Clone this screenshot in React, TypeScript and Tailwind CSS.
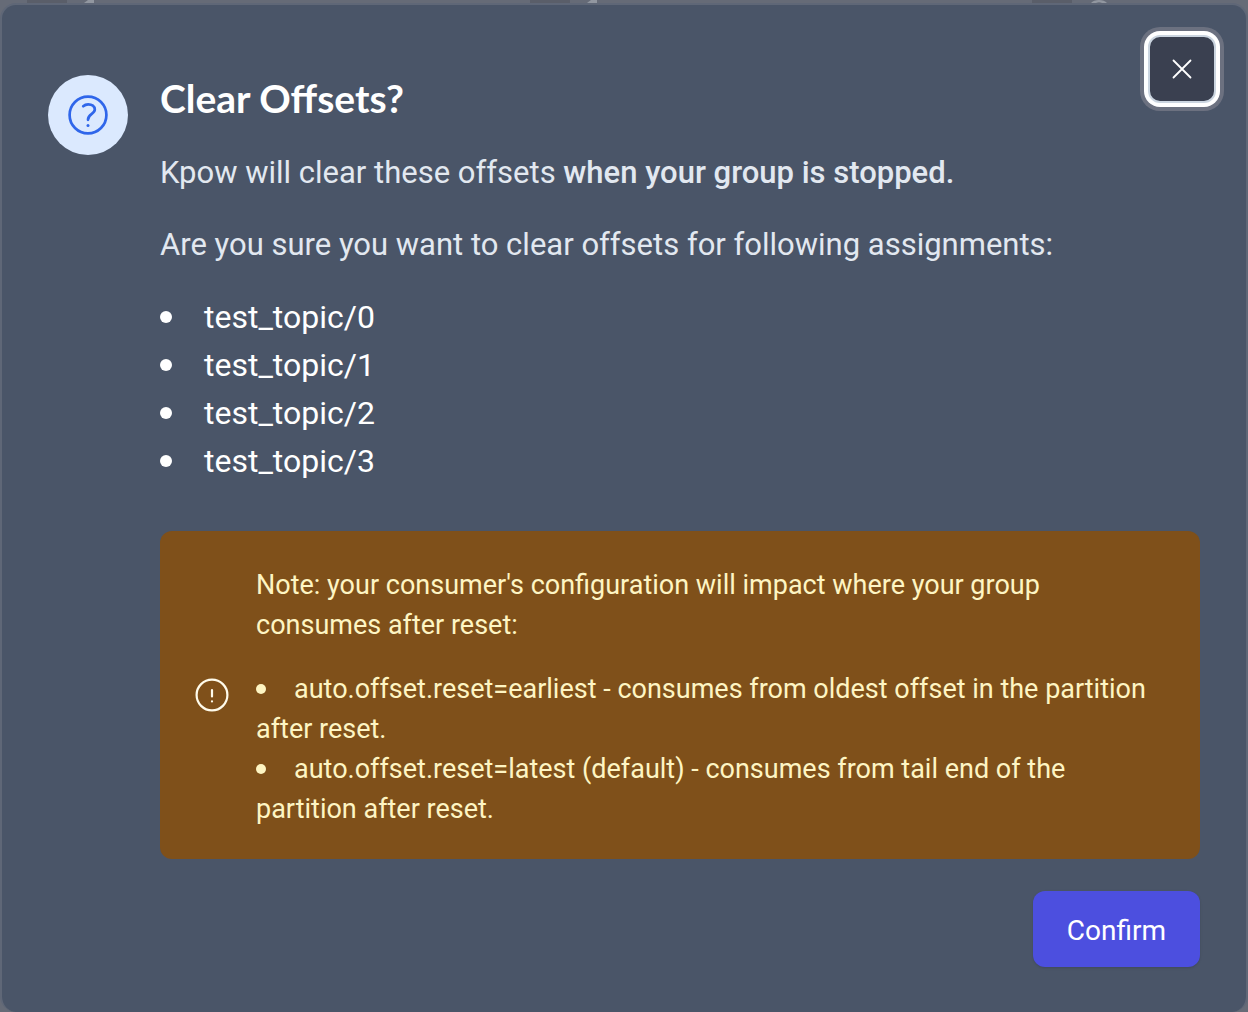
import React from "react";

const topics = ["test_topic/0", "test_topic/1", "test_topic/2", "test_topic/3"];

const notes = [
  "auto.offset.reset=earliest - consumes from oldest offset in the partition after reset.",
  "auto.offset.reset=latest (default) - consumes from tail end of the partition after reset.",
];

function QuestionIcon() {
  return (
    <svg viewBox="0 0 40 40" className="size-10" fill="none" stroke="currentColor" strokeLinecap="round" strokeLinejoin="round" aria-hidden="true">
      <circle cx="20" cy="20" r="18.4" strokeWidth="2.7" />
      <path d="M15.2 11.2C16.6 9.9 18.3 9.3 20.2 9.3C23.8 9.3 26.8 11.2 26.8 14.6C26.8 19.2 20 18.6 20 24.8" strokeWidth="2.7" />
      <path d="M20 30.6h.01" strokeWidth="3" />
    </svg>
  );
}

function AlertIcon() {
  return (
    <svg viewBox="0 0 40 40" className="size-10 shrink-0 text-[#fffbeb]" fill="none" stroke="currentColor" strokeLinecap="round" aria-hidden="true">
      <circle cx="20" cy="20" r="15.4" strokeWidth="2.2" />
      <path d="M20 15v6.4M20 26.3v.2" strokeWidth="2.2" />
    </svg>
  );
}

function BackdropRow() {
  return (
    <div className="grid h-[3px] grid-cols-[503px_502px_1fr]" aria-hidden="true">
      {[0, 1, 2].map((i) => (
        <div key={i} className="flex pl-[27px]">
          <span className="h-[3px] w-10 bg-[#5a5e69]" />
          <svg viewBox="0 0 16 3" className={i === 2 ? "ml-[19px] h-[3px] w-4" : "ml-4 h-[3px] w-4"} fill="#9297a0">
            {i === 2 ? <path d="M0 3C3 -1 13 -1 16 3H11C9 2 7 2 5 3Z" /> : <path d="M1 3L5 0H11V3Z" />}
          </svg>
        </div>
      ))}
    </div>
  );
}

export default function App() {
  return (
    <div className="flex min-h-screen flex-col bg-[#666b77] font-[Roboto,sans-serif]">
      <BackdropRow />
      <div
        role="dialog"
        aria-labelledby="dialog-title"
        className="flex-1 rounded-2xl border-2 border-b-0 border-[#5f6777] bg-[#4a5568] px-[46px] pt-[30px] pb-11"
      >
        <div className="flex h-10 justify-end">
          <button
            type="button"
            aria-label="Close"
            className="-mr-4 flex size-[68px] shrink-0 items-center justify-center rounded-xl border-2 border-[#cbd5e0] bg-[#3a4050] text-white shadow-[0_0_0_4px_#ffffff,0_0_0_8px_#6c7180]"
          >
            <svg viewBox="0 0 20 20" className="size-5" fill="none" stroke="currentColor" strokeWidth="1.8" strokeLinecap="round" aria-hidden="true">
              <path d="M1.5 1.5l17 17M18.5 1.5l-17 17" />
            </svg>
          </button>
        </div>
        <div className="flex items-start gap-8">
          <div className="flex size-20 shrink-0 items-center justify-center rounded-full bg-[#dbe9fe] text-[#2f66ea]">
            <QuestionIcon />
          </div>
          <div className="min-w-0 flex-1 text-[31px] leading-[48px] text-[#e2e8f0]">
            <h1 id="dialog-title" className="font-[Lato,sans-serif] text-[39px] leading-[46px] font-bold text-white">
              Clear Offsets?
            </h1>
            <p className="mt-7">
              Kpow will clear these offsets <strong className="font-medium">when your group is stopped.</strong>
            </p>
            <p className="mt-6">Are you sure you want to clear offsets for following assignments:</p>
            <ul className="mt-6 text-[32px] text-white">
              {topics.map((topic) => (
                <li key={topic} className="flex items-center gap-8">
                  <span className="size-3 rounded-full bg-white" />
                  {topic}
                </li>
              ))}
            </ul>
          </div>
        </div>
        <div className="mt-[46px] ml-28 flex items-center gap-6 rounded-xl bg-[#7f501a] px-8 text-[#fef5c3]">
          <AlertIcon />
          <div className="flex-1 pt-[34px] pb-[30px] text-[27px] leading-10">
            <p>Note: your consumer's configuration will impact where your group consumes after reset:</p>
            <ul className="mt-6">
              {notes.map((note) => (
                <li key={note}>
                  <span className="mr-7 mb-1 inline-block size-[10px] rounded-full bg-[#fef5c3] align-middle" />
                  {note}
                </li>
              ))}
            </ul>
          </div>
        </div>
        <div className="mt-8 flex justify-end">
          <button type="button" className="h-[76px] rounded-xl bg-[#4c4fdf] px-[34px] pt-1 text-[28px] leading-10 text-white shadow-sm">
            Confirm
          </button>
        </div>
      </div>
    </div>
  );
}
